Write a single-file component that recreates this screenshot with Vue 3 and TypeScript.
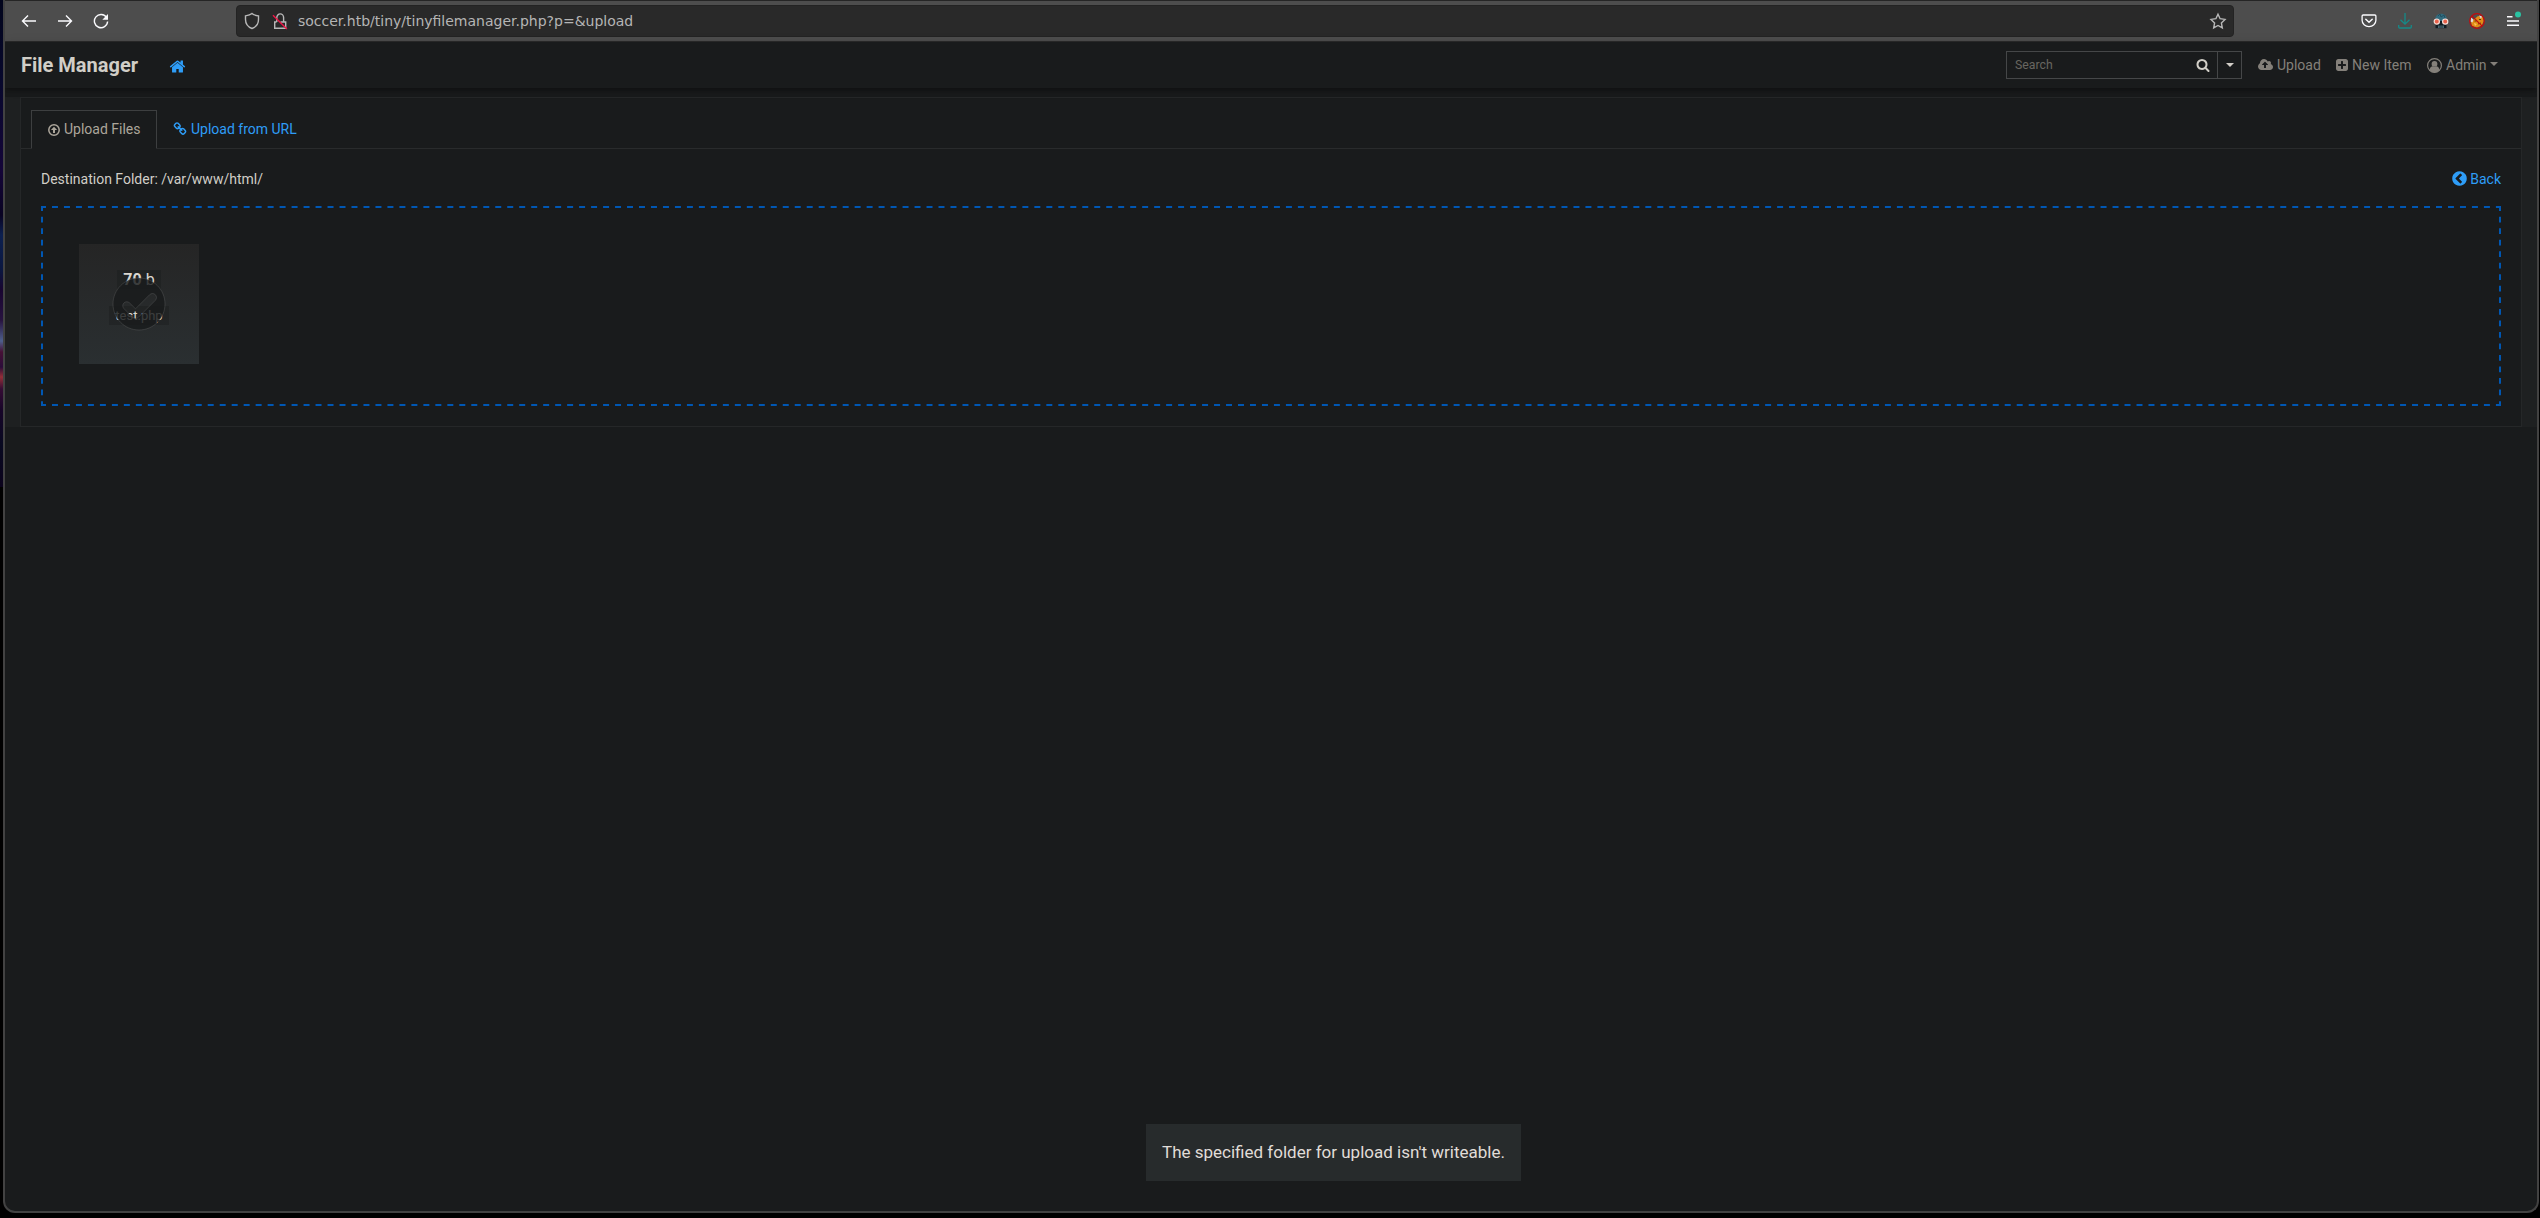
<script setup lang="ts">
import { ref } from 'vue'

const address = ref('soccer.htb/tiny/tinyfilemanager.php?p=&upload')
const destination = ref('/var/www/html/')
const file = ref({ name: 'test.php', size: '70', unit: 'b' })
const toast = ref("The specified folder for upload isn't writeable.")

const icons = {
  home: 'M1472 992v480q0 26-19 45t-45 19h-384v-384h-256v384h-384q-26 0-45-19t-19-45v-480q0-1 .5-3t.5-3l575-474 575 474q1 2 1 6zm223-69l-62 74q-8 9-21 11h-3q-13 0-21-7l-692-577-692 577q-12 8-24 7-13-2-21-11l-62-74q-8-10-7-23.5t11-21.5l719-599q32-26 76-26t76 26l244 204v-195q0-14 9-23t23-9h192q14 0 23 9t9 23v408l219 182q10 8 11 21.5t-7 23.5z',
  search: 'M1216 832q0-185-131.5-316.5t-316.5-131.5-316.5 131.5-131.5 316.5 131.5 316.5 316.5 131.5 316.5-131.5 131.5-316.5zm512 832q0 52-38 90t-90 38q-54 0-90-38l-343-342q-179 124-399 124-143 0-273.5-55.5t-225-150-150-225-55.5-273.5 55.5-273.5 150-225 225-150 273.5-55.5 273.5 55.5 225 150 150 225 55.5 273.5q0 220-124 399l343 343q37 37 37 90z',
  cloud: 'M1280 864q0-14-9-23l-352-352q-9-9-23-9t-23 9l-351 351q-10 12-10 24 0 14 9 23t23 9h224v352q0 13 9.5 22.5t22.5 9.5h192q13 0 22.5-9.5t9.5-22.5v-352h224q13 0 22.5-9.5t9.5-22.5zm640 288q0 159-112.5 271.5t-271.5 112.5h-1088q-185 0-316.5-131.5t-131.5-316.5q0-130 70-240t188-165q-2-30-2-43 0-212 150-362t362-150q156 0 285.5 87t188.5 231q71-62 166-62 106 0 181 75t75 181q0 76-41 138 130 31 213.5 135.5t83.5 238.5z',
  plus: 'M1408 960v-128q0-26-19-45t-45-19h-320v-320q0-26-19-45t-45-19h-128q-26 0-45 19t-19 45v320h-320q-26 0-45 19t-19 45v128q0 26 19 45t45 19h320v320q0 26 19 45t45 19h128q26 0 45-19t19-45v-320h320q26 0 45-19t19-45zm256-544v960q0 119-84.5 203.5t-203.5 84.5h-960q-119 0-203.5-84.5t-84.5-203.5v-960q0-119 84.5-203.5t203.5-84.5h960q119 0 203.5 84.5t84.5 203.5z',
  back: 'M1037 1395l102-102q19-19 19-45t-19-45l-307-307 307-307q19-19 19-45t-19-45l-102-102q-19-19-45-19t-45 19l-454 454q-19 19-19 45t19 45l454 454q19 19 45 19t45-19zm627-499q0 209-103 385.5t-279.5 279.5-385.5 103-385.5-103-279.5-279.5-103-385.5 103-385.5 279.5-279.5 385.5-103 385.5 103 279.5 279.5 103 385.5z',
  link: 'M1520 1216q0-40-28-68l-208-208q-28-28-68-28-42 0-72 32 3 3 19 18.5t21.5 21.5 15 19 13 25.5 3.5 27.5q0 40-28 68t-68 28q-15 0-27.5-3.5t-25.5-13-19-15-21.5-21.5-18.5-19q-33 31-33 73 0 40 28 68l206 207q27 27 68 27 40 0 68-26l147-146q28-28 28-67zm-703-705q0-40-28-68l-206-207q-28-28-68-28-39 0-68 27l-147 146q-28 28-28 67 0 40 28 68l208 208q27 27 68 27 42 0 72-31-3-3-19-18.5t-21.5-21.5-15-19-13-25.5-3.5-27.5q0-40 28-68t68-28q15 0 27.5 3.5t25.5 13 19 15 21.5 21.5 18.5 19q33-31 33-73zm895 705q0 120-85 203l-147 146q-83 83-203 83-121 0-204-85l-206-207q-83-83-83-203 0-123 88-209l-88-88q-86 88-208 88-120 0-204-84l-208-208q-84-84-84-204t85-203l147-146q83-83 203-83 121 0 204 85l206 207q83 83 83 203 0 123-88 209l88 88q86-88 208-88 120 0 204 84l208 208q84 84 84 204z',
}
</script>

<template>
  <div class="desktop">
    <div class="wallpaper"></div>
    <div class="window">
      <header class="toolbar">
        <div class="history">
          <svg width="16" height="16" viewBox="0 0 16 16" class="line"><path d="M15 8H1.8M7 2.5 1.5 8 7 13.5" /></svg>
          <svg width="16" height="16" viewBox="0 0 16 16" class="line"><path d="M1 8h13.2M9 2.5 14.500 8 9 13.500" /></svg>
          <svg width="16" height="16" viewBox="0 0 16 16" class="line"><path d="M13.6 4.6A6.600 6.600 0 1 0 14.600 8.500" /><path d="M15 1v5.700H9.300z" fill="#fbfbfe" stroke="none" /></svg>
        </div>
        <div class="address">
          <svg class="shield" width="16" height="18" viewBox="0 0 16 18"><path d="M8 1.500 C6.300 2.900 3.900 3.500 1.500 3.900 V7.500 C1.500 11.800 4 14.900 8 16.500 C12 14.900 14.500 11.800 14.500 7.500 V3.900 C12.100 3.500 9.700 2.900 8 1.500z" /></svg>
          <svg class="lock" width="16" height="18" viewBox="0 0 16 18"><path d="M4.800 10V5.500a3.400 3.600 0 0 1 6.800 0V10M4.500 10H2.700v6.200h11V10H8.500" /><path d="M1 3.200 14.900 17" stroke="#f01446" /></svg>
          <span class="url">{{ address }}</span>
          <svg class="star" width="18" height="18" viewBox="0 0 18 18"><path d="M9 2.200l2.100 4.500 4.900.7-3.600 3.500.9 5L9 13.500l-4.300 2.400.9-5L2 7.400l4.900-.7z" /></svg>
        </div>
        <div class="extensions">
          <svg width="16" height="16" viewBox="0 0 16 16"><path d="M2.200 2h11.600a1.100 1.100 0 0 1 1.100 1.100v4.100a6.900 6.500 0 0 1-13.800 0V3.100A1.100 1.100 0 0 1 2.200 2z" fill="none" stroke="#fbfbfe" stroke-width="1.300" /><path d="M4.800 6.200 8 9.300l3.200-3.100" fill="none" stroke="#fbfbfe" stroke-width="1.500" stroke-linecap="round" /></svg>
          <svg width="16" height="16" viewBox="0 0 16 16"><path d="M8 0v11M3.500 6.700 8 11.200l4.500-4.500M1.700 12v2a1 1 0 0 0 1 1h10.600a1 1 0 0 0 1-1v-2" fill="none" stroke="#148a88" stroke-width="1.300" /></svg>
          <svg width="16" height="16" viewBox="0 0 16 16">
            <path d="M2 8C2 3 4.300.7 8 .7S14 3 14 8z" fill="#326b7e" /><path d="M5 3l2-2 1 3 3-2 1 3" stroke="#214f60" fill="none" />
            <path d="M2.500 8h11v7.200h-11z" fill="#101c23" /><path d="M5 12.500h6V15H5z" fill="#46646f" /><path d="M7 12.500V15M9 12.500V15" stroke="#101c23" stroke-width=".6" />
            <circle cx="3.800" cy="8.600" r="2.600" fill="#e8604a" stroke="#f4ded7" stroke-width="1.200" /><circle cx="12.200" cy="8.600" r="2.600" fill="#e8604a" stroke="#f4ded7" stroke-width="1.200" />
          </svg>
          <svg width="16" height="16" viewBox="0 0 16 16">
            <path d="M6 5.500l3-2.500 5 1 .8 4-2 4.500L8 14.500l-5-1.500L2 9z" fill="#e28c16" /><path d="M10 2.500l3 .8-1 2.700zM2 4.500l2.500 2-1 3-2-1z" fill="#ddd" /><path d="M5 10l3 1-2 2z" fill="#ffc35a" />
            <path d="M5.500 8h2M10 6.500h2M9 11l3-1" stroke="#5a3410" /><circle cx="8" cy="8" r="7.300" fill="none" stroke="#c5080c" stroke-width="1.200" /><path d="M2.800 2.800l10.400 10.400" stroke="#c5080c" stroke-width="1.200" />
          </svg>
          <svg width="18" height="18" viewBox="0 0 18 18" class="menu"><path d="M3 4.700h5.500M3 9h12M3 13.200h12" stroke="#fbfbfe" stroke-width="1.400" /><circle cx="14" cy="2.400" r="3" fill="#2ac3a2" /></svg>
        </div>
      </header>

      <nav class="navbar">
        <strong class="brand">File Manager</strong>
        <svg class="home" width="17" height="17" viewBox="0 0 1792 1792"><path :d="icons.home" /></svg>
        <div class="search">
          <span class="field">Search</span>
          <svg class="glass" width="14" height="14" viewBox="0 0 1792 1792"><path :d="icons.search" /></svg>
          <span class="more"><i class="caret"></i></span>
        </div>
        <a class="item upload"><svg width="15" height="14" viewBox="0 0 1920 1792"><path :d="icons.cloud" /></svg><span>Upload</span></a>
        <a class="item new"><svg width="14" height="14" viewBox="0 0 1792 1792"><path :d="icons.plus" /></svg><span>New Item</span></a>
        <a class="item admin">
          <svg width="15" height="15" viewBox="0 0 15 15"><circle cx="7.500" cy="7.500" r="6.900" fill="none" stroke="currentColor" stroke-width="1.200" /><circle cx="7.500" cy="5.900" r="2.900" /><path d="M2.400 12.200c.4-2.200 1.300-3.500 2.900-3.900 1.300.9 3.100.9 4.400 0 1.600.4 2.500 1.700 2.900 3.900a7 7 0 0 1-10.200 0z" /></svg>
          <span>Admin</span><i class="caret"></i>
        </a>
      </nav>

      <main class="content">
        <section class="card">
          <div class="tabs">
            <a class="tab active">
              <svg width="12" height="12" viewBox="0 0 12 12"><circle cx="6" cy="6" r="5.200" fill="none" stroke="currentColor" stroke-width="1.500" /><path d="M6 2.700 9.100 6H7v3H5V6H2.900z" /></svg>
              <span>Upload Files</span>
            </a>
            <a class="tab">
              <svg width="14" height="14" viewBox="0 0 1792 1792"><path :d="icons.link" /></svg>
              <span>Upload from URL</span>
            </a>
          </div>
          <div class="folder">
            <span class="path">Destination Folder: {{ destination }}</span>
            <a class="back"><svg width="17" height="17" viewBox="0 0 1792 1792"><path :d="icons.back" /></svg><span>Back</span></a>
          </div>
          <div class="dropzone">
            <svg class="outline" width="2460" height="200" viewBox="0 0 2460 200">
              <path d="M2 1H2458M2 199H2458" stroke-dasharray="5.990 5.990" stroke-dashoffset="2.995" />
              <path d="M1 2V198M2459 2V198" stroke-dasharray="5.765 5.765" stroke-dashoffset="2.882" />
              <path d="M0 1H2M2458 1H2460M0 199H2M2458 199H2460" />
            </svg>
            <div class="preview">
              <div class="size"><strong>{{ file.size }}</strong> {{ file.unit }}</div>
              <div class="name">{{ file.name }}</div>
              <svg class="mark" width="54" height="54" viewBox="0 0 54 54">
                <path fill-rule="evenodd" d="M23.5,31.843 L17.585,25.928 C16.025,24.368 13.491,24.367 11.929,25.929 C10.370,27.488 10.367,30.023 11.928,31.585 L20.415,40.072 C20.513,40.170 20.616,40.263 20.722,40.349 C22.284,41.873 24.794,41.863 26.346,40.311 L43.311,23.346 C44.877,21.780 44.876,19.248 43.314,17.686 C41.755,16.127 39.218,16.126 37.654,17.689 L23.5,31.843 Z M27,53 C41.359,53 53,41.359 53,27 C53,12.641 41.359,1 27,1 C12.641,1 1,12.641 1,27 C1,41.359 12.641,53 27,53 Z" />
              </svg>
            </div>
          </div>
        </section>
      </main>
      <div class="toast">{{ toast }}</div>
    </div>
  </div>
</template>

<style>
body { background: #000; overflow: hidden; }
</style>

<style scoped>
* { box-sizing: border-box; }
.desktop { display: flex; width: 2540px; height: 1218px; background: #000; overflow: hidden; font: 14px/21px Roboto, sans-serif; color: #d1cec7; }
.wallpaper { width: 3px; height: 487px; background: linear-gradient(#02051c 0, #07082c 80px, #140538 170px, #090322 215px, #0c2050 235px, #0b1740 270px, #180530 290px, #27133f 320px, #4e5f8c 341px, #461035 352px, #2b0c39 367px, #922e37 377px, #350c34 389px, #170528 410px, #080920 445px, #0b031c 487px); }
.window { display: flex; flex-direction: column; width: 2536px; height: 1213px; border: solid #424242; border-width: 0 2px 2px; border-radius: 0 0 12px 12px; background: #191b1c; overflow: hidden; }

.toolbar { display: flex; flex: none; align-items: center; height: 42px; border-top: 1px solid #252525; border-bottom: 1px solid #2b2b2b; background: #4d4d4d; }
.history { display: flex; flex: none; gap: 20px; width: 231px; padding-left: 16px; }
.line { fill: none; stroke: #fbfbfe; stroke-width: 1.4; }
.address { display: flex; flex: none; align-items: center; width: 1998px; height: 32px; padding: 0 6px 0 7px; border: 1px solid #232323; border-radius: 4px; background: #292929; }
.address svg { fill: none; stroke: #b8b8b8; stroke-width: 1.4; }
.lock { margin-left: 12px; }
.url { margin-left: 10px; font: 14px/20px "DejaVu Sans", sans-serif; color: #b5b5b5; }
.star { margin-left: auto; }
.extensions { display: flex; align-items: center; gap: 20px; margin-left: auto; padding-right: 15px; }
.menu { margin-left: -1px; overflow: visible; }

.navbar { position: relative; display: flex; flex: none; align-items: center; height: 46px; padding-left: 16px; background: #191b1c; box-shadow: 0 4px 5px rgba(0, 0, 0, .14), 0 1px 10px rgba(0, 0, 0, .12), 0 2px 4px -1px rgba(0, 0, 0, .2); }
.navbar svg { fill: currentColor; }
.brand { width: 148px; font-size: 20px; font-weight: 700; line-height: 30px; color: #d1cec7; }
.navbar .home { margin-top: 3px; color: #2e9df7; }
.search { display: flex; align-items: center; width: 236px; height: 28px; margin-left: auto; border: 1px solid #454748; }
.field { flex: 1; padding-left: 8px; font-size: 12.25px; color: #686660; }
.glass { margin-right: 7px; color: #d1cec7; }
.more { display: flex; align-items: center; justify-content: center; width: 24px; height: 26px; border-left: 1px solid #454748; color: #d1cec7; }
.caret { border: 4px solid transparent; border-top-color: currentColor; border-bottom: 0; }
.item { display: flex; align-items: center; gap: 3px; color: #84807a; }
.upload { gap: 4px; width: 77px; margin-left: 16px; }
.new { width: 92px; }
.admin { gap: 4px; width: 110px; }
.admin .caret { margin-top: -2px; }

.content { margin-top: 9px; padding: 0 15px; background: #1e2021; }
.card { height: 330px; border: 1px solid #252728; background: #191b1c; }
.tabs { display: flex; height: 51px; padding: 12px 10px 0; border-bottom: 1px solid #292b2c; }
.tab { display: flex; align-items: center; height: 38px; padding: 0 16px; gap: 4px; white-space: nowrap; color: #2e9df7; }
.tab svg { flex: none; fill: currentColor; }
.active { width: 126px; height: 39px; padding-right: 0; border: 1px solid #3d3f40; border-bottom-color: #191b1c; background: #191b1c; color: #aca69b; }
.folder { display: flex; align-items: center; justify-content: space-between; height: 57px; padding: 4px 20px 0; }
.back { display: flex; align-items: center; gap: 2px; color: #2e9df7; }
.back svg { margin-top: -2px; fill: currentColor; }
.dropzone { position: relative; height: 200px; margin: 0 20px; padding: 38px; }
.outline { position: absolute; left: 0; top: 0; fill: none; stroke: #0057b3; stroke-width: 2; }
.preview { position: relative; display: flex; flex-direction: column; align-items: center; width: 120px; height: 120px; padding-top: 26px; background: linear-gradient(#252525, #2a2f31); }
.size, .name { background: rgba(25, 27, 28, .4); }
.size { height: 19px; padding: 0 6px; font-size: 16px; line-height: 19px; color: #d9d6d0; }
.name { height: 19px; margin-top: 17px; padding: 0 6px; font-size: 13px; line-height: 19px; color: #d9d6d0; }
.mark { position: absolute; left: 33px; top: 33px; fill: #191b1c; fill-opacity: .82; stroke: #747474; stroke-opacity: .3; }
.toast { flex: none; width: 375px; height: 57px; margin: auto 0 30px 1141px; padding: 0 16px; font-size: 17px; line-height: 56px; white-space: nowrap; background: #272b2c; color: #e0ddd8; }
</style>
